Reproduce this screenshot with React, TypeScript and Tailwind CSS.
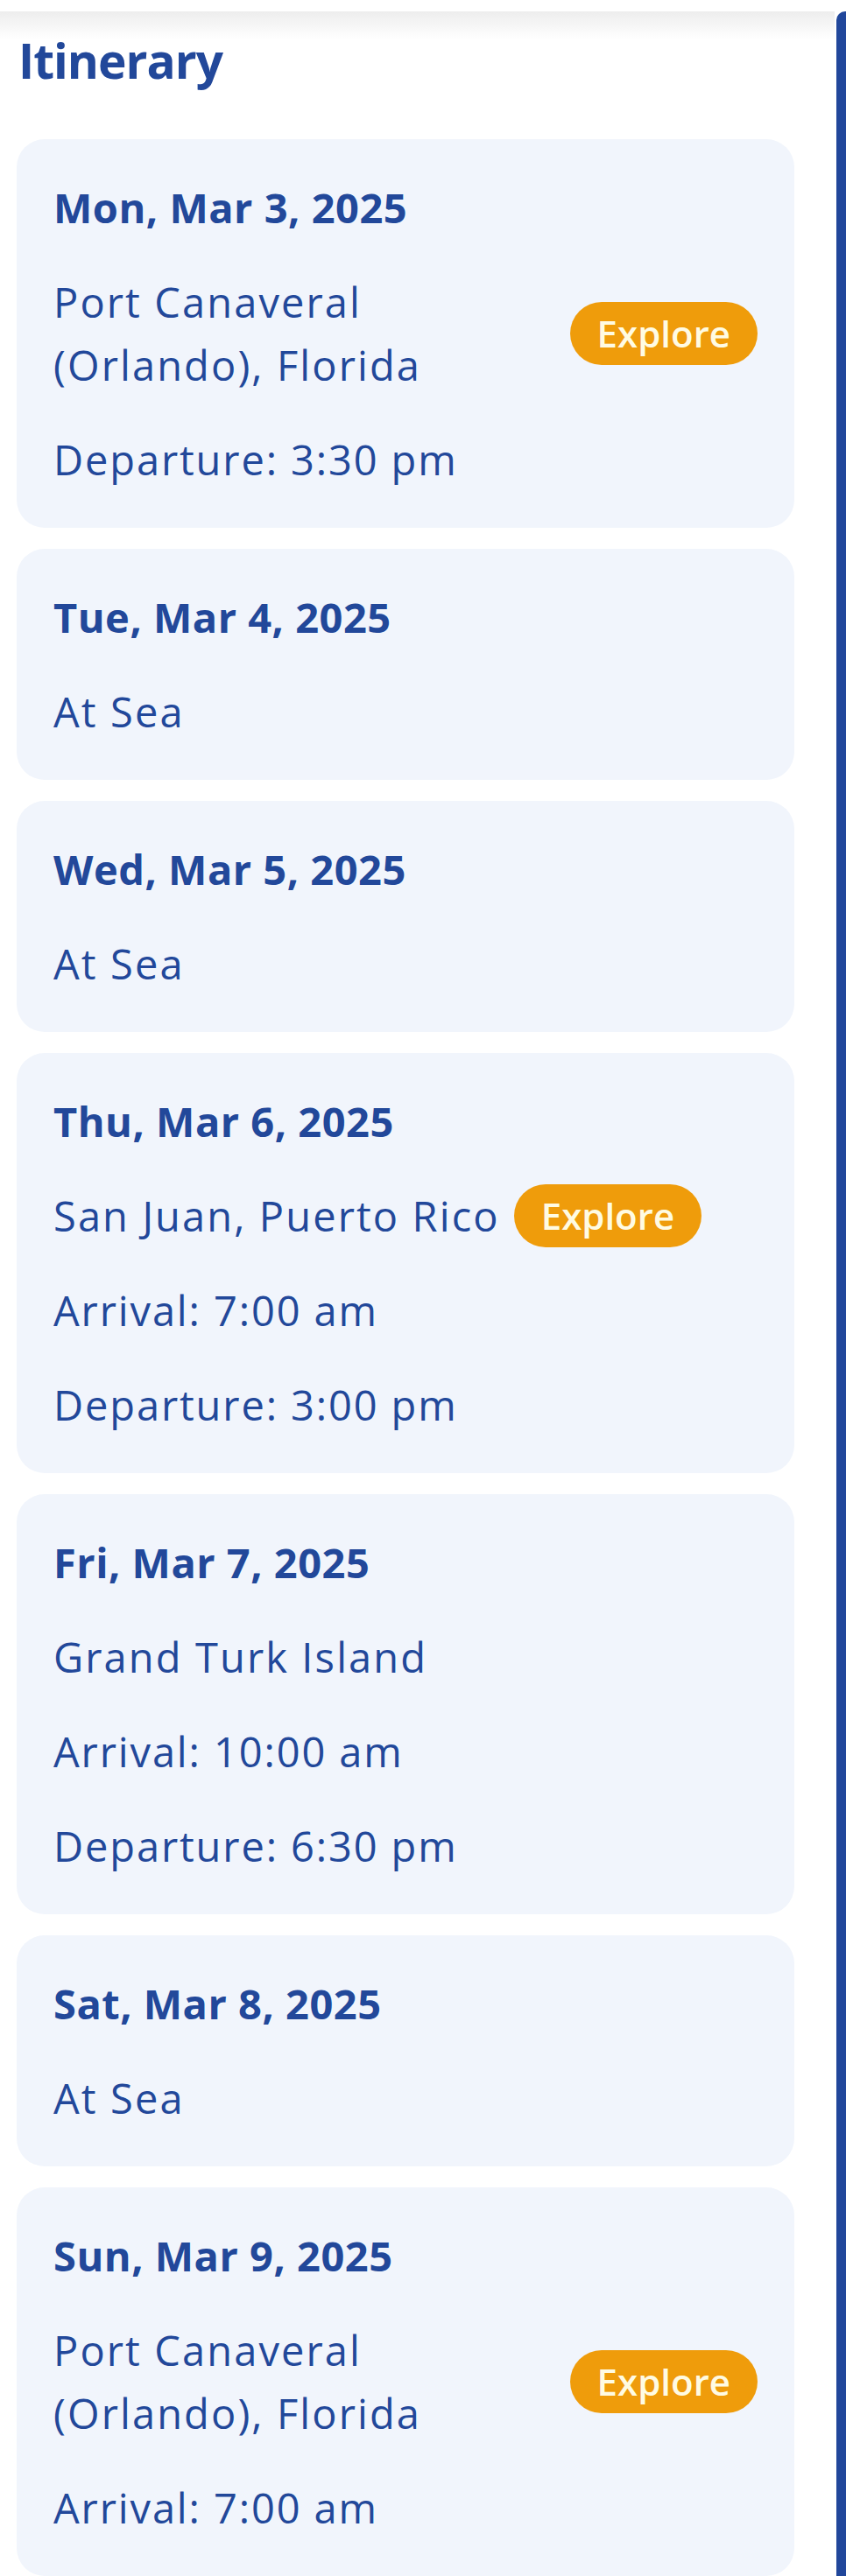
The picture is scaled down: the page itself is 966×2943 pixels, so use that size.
import React from 'react';

type Day = {
  date: string;
  port: string;
  explore?: boolean;
  arrival?: string;
  departure?: string;
};

const days: Day[] = [
  { date: 'Mon, Mar 3, 2025', port: 'Port Canaveral (Orlando), Florida', explore: true, departure: '3:30 pm' },
  { date: 'Tue, Mar 4, 2025', port: 'At Sea' },
  { date: 'Wed, Mar 5, 2025', port: 'At Sea' },
  { date: 'Thu, Mar 6, 2025', port: 'San Juan, Puerto Rico', explore: true, arrival: '7:00 am', departure: '3:00 pm' },
  { date: 'Fri, Mar 7, 2025', port: 'Grand Turk Island', arrival: '10:00 am', departure: '6:30 pm' },
  { date: 'Sat, Mar 8, 2025', port: 'At Sea' },
  { date: 'Sun, Mar 9, 2025', port: 'Port Canaveral (Orlando), Florida', explore: true, arrival: '7:00 am' },
];

function DayCard({ day }: { day: Day }) {
  return (
    <div className="rounded-[32px] bg-[#f1f5fc] p-[42px] flex flex-col gap-[36px] text-[#22489a]">
      <div className="text-[47px] leading-[72px] font-bold tracking-[0.5px]">{day.date}</div>
      <div className="flex items-center gap-[16px]">
        <span className="text-[47px] leading-[72px] tracking-[0.045em]">{day.port}</span>
        {day.explore && (
          <button className="shrink-0 h-[72px] px-[31px] rounded-full bg-[#ef9c0b] text-[#fffbe3] text-[42px] font-semibold leading-none flex items-center">
            Explore
          </button>
        )}
      </div>
      {day.arrival && (
        <div className="text-[47px] leading-[72px] tracking-[0.04em]">Arrival: {day.arrival}</div>
      )}
      {day.departure && (
        <div className="text-[47px] leading-[72px] tracking-[0.04em]">Departure: {day.departure}</div>
      )}
    </div>
  );
}

export default function App() {
  return (
    <div className="w-[966px] bg-white font-['Open_Sans',sans-serif]">
      <div className="h-[13px] bg-white" />
      <div className="flex">
        {/* Main panel */}
        <div className="w-[953px] pt-[15px] pl-[19px] pr-[46px] pb-[24px] bg-[linear-gradient(#ededed,#ffffff_32px)]">
          <h2 className="text-[55px] leading-[82px] font-bold text-[#22489a] tracking-[-1px] pl-[2px] mb-[49px]">
            Itinerary
          </h2>
          <div className="flex flex-col gap-[24px]">
            {days.map((d) => (
              <DayCard key={d.date} day={d} />
            ))}
          </div>
        </div>
        <div className="w-[2px] bg-white" />
        {/* Right rail */}
        <div className="w-[11px] bg-[#21479b] rounded-tl-[10px]" />
      </div>
    </div>
  );
}
